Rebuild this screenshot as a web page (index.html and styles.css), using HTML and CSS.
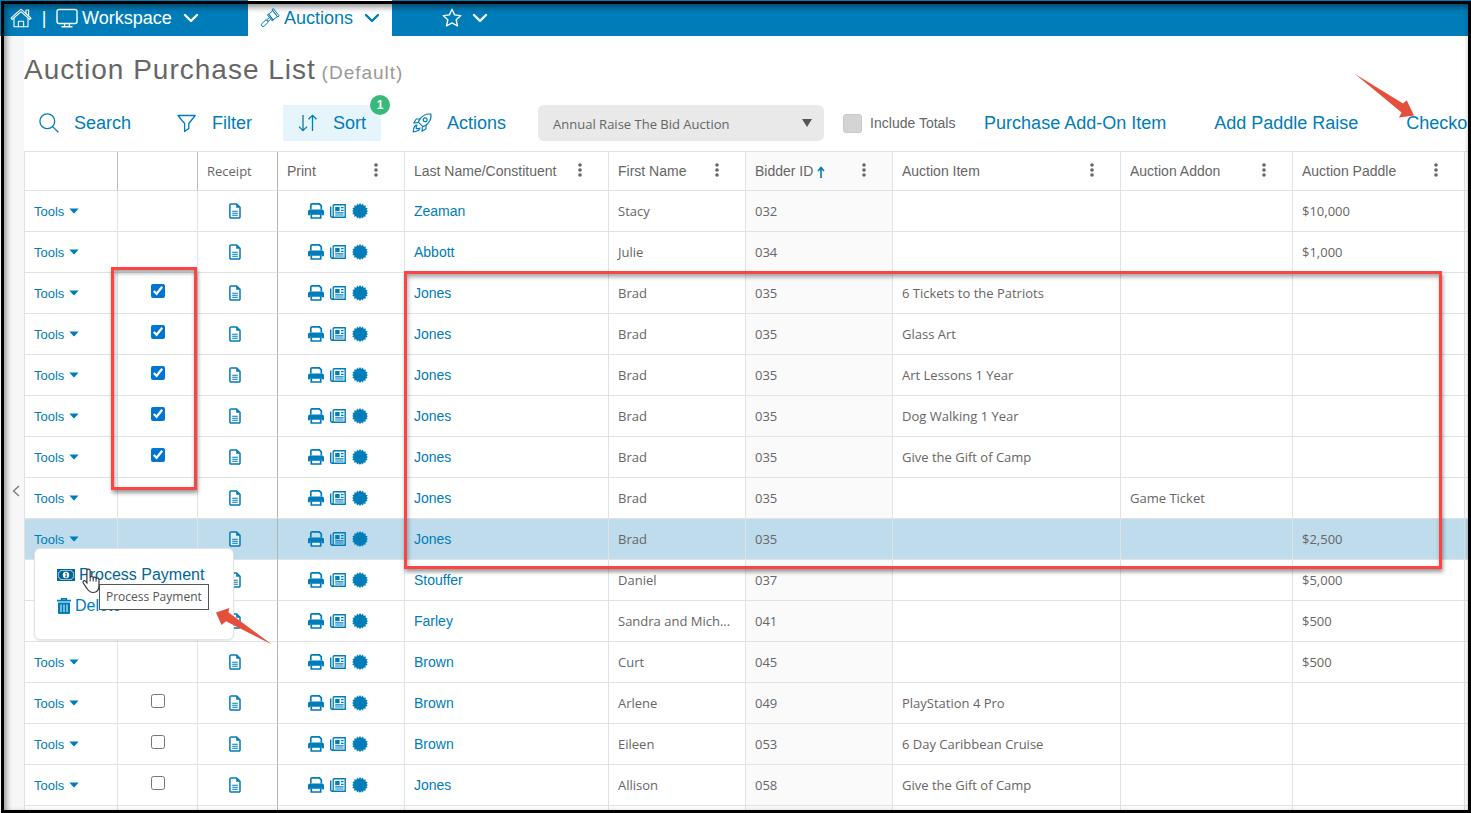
FILE: index.html
```html
<!DOCTYPE html>
<html lang="en">
<head>
<meta charset="utf-8">
<meta name="viewport" content="width=device-width, initial-scale=1">
<title>Auction Purchase List</title>
<link rel="stylesheet" href="styles.css">
</head>
<body>
<svg class="sprite" aria-hidden="true">
  <symbol id="doc" viewBox="0 0 12 16"><path d="M2 .9h5.6L11 4.3V14a1.1 1.1 0 0 1-1.1 1.1H2A1.1 1.1 0 0 1 .9 14V2A1.1 1.1 0 0 1 2 .9z" fill="#fff" fill-opacity=".5" stroke="currentColor" stroke-width="1.5"/><path d="M7.2 1v3.8H11z" fill="currentColor"/><path d="M3.2 8.2h5.6M3.2 10.2h5.6M3.2 12.2h5.6" stroke="currentColor" stroke-width="1.1"/></symbol>
  <symbol id="printer" viewBox="0 0 16 16"><path d="M2.8 6.5V2A1.2 1.2 0 0 1 4 .9h7.3l2 2v3.6" fill="none" stroke="currentColor" stroke-width="1.7"/><path d="M2 6.600h12a2 2 0 0 1 2 2v3.600h-2.4V10.400H2.4v1.800H0V8.600a2 2 0 0 1 2-2z" fill="currentColor"/><path d="M3.3 10.8h9.4v4.2H3.3z" fill="#fff" fill-opacity=".7" stroke="currentColor" stroke-width="1.7"/></symbol>
  <symbol id="news" viewBox="0 0 16 14"><path d="M3.2.8h12v12.4H2.1A1.4 1.4 0 0 1 .7 11.8V2.6" fill="none" stroke="currentColor" stroke-width="1.4"/><path d="M3.2 1v10.8a1.3 1.3 0 0 1-1.2 1.4" fill="none" stroke="currentColor" stroke-width="1.3"/><path d="M5.2 3h4.4v4.2H5.2z" fill="currentColor"/><path d="M11 3.6h2.6M11 6.4h2.6M5.2 8.9h8.4M5.2 11h8.4" stroke="currentColor" stroke-width="1.2"/></symbol>
  <symbol id="seal" viewBox="0 0 16 16"><path fill="currentColor" d="M8 0l1.4 2L11 .6l.6 2.2 2.200-.4-.2 2.300 2.100.5-1.200 1.900L16 8l-1.500 1.200 1.100 1.800-2.100.6.2 2.200-2.200-.4-.5 2.200-1.700-1.400L8 16l-1.400-1.800L5 15.500l-.6-2.200-2.200.5.200-2.300-2.100-.5 1.200-1.900L0 8l1.500-1.100L.4 5l2.100-.5-.2-2.200 2.200.4L5 .6 6.700 2z"/></symbol>
  <symbol id="dots" viewBox="0 0 4 14"><g fill="currentColor"><circle cx="2" cy="2" r="1.8"/><circle cx="2" cy="7" r="1.8"/><circle cx="2" cy="12" r="1.8"/></g></symbol>
  <symbol id="chev" viewBox="0 0 16 10"><path d="M2 2l6 6 6-6" fill="none" stroke="currentColor" stroke-width="2.4" stroke-linecap="round" stroke-linejoin="round"/></symbol>
  <symbol id="caret" viewBox="0 0 10 6"><path d="M.4.5h9.2L5.6 5a.8.8 0 0 1-1.2 0z" fill="currentColor"/></symbol>
</svg>

<div class="app">
  <nav class="nav">
    <button class="nav-btn" aria-label="Home"><svg width="22" height="20" viewBox="0 0 22 20" fill="none" stroke="currentColor" stroke-width="1.1" stroke-linejoin="round" stroke-linecap="round"><path d="M1 10.2L11 1.2l10 9-1.1 1.3L11 3.6 2.1 11.500z"/><path d="M4 10.2V18.8h14V10.2"/><path d="M16 5.4V2h2.6v5.8"/><path d="M8.4 18.8v-5.600h5.200v5.600"/></svg></button>
    <span class="nav-sep">|</span>
    <button class="nav-btn workspace"><svg width="22" height="20" viewBox="0 0 22 20" fill="none" stroke="currentColor" stroke-width="1.4"><rect x="1" y="1.5" width="20" height="14" rx="2"/><path d="M8.6 15.5v3M13.4 15.5v3M5.5 18.7h11"/></svg><span>Workspace</span><svg class="chev" width="16" height="10"><use href="#chev"/></svg></button>
    <button class="nav-btn tab"><svg width="20" height="20" viewBox="0 0 20 20" fill="none" stroke="currentColor" stroke-width="1" stroke-linejoin="round"><path d="M8.6 6.6l4-4 4.8 6-4.6 3.4z"/><path d="M12 1.6l1.5-.9 5.6 7.1-1.3 1.3zM7.4 6.8l1.2-.9 4.9 6.2-1.2.9z"/><path d="M9 9.8l-2.2 2 1.3 1.5 2.3-1.9"/><path d="M6.2 11.6l2.2 2.5-4.3 4a1.7 1.7 0 0 1-2.3-2.5z"/></svg><span>Auctions</span><svg class="chev" width="16" height="10"><use href="#chev"/></svg></button>
    <button class="nav-btn star" aria-label="Favorites"><svg width="20" height="20" viewBox="0 0 20 20" fill="none" stroke="currentColor" stroke-width="1.4" stroke-linejoin="round"><path d="M10 1.2l2.6 5.7 6.2.7-4.6 4.2 1.3 6.2-5.5-3.1L4.500 18l1.300-6.200L1.200 7.600l6.200-.7z"/></svg><svg class="chev" width="16" height="10"><use href="#chev"/></svg></button>
  </nav>

  <div class="body">
    <aside class="rail"><button class="rail-btn" aria-label="Expand sidebar"><svg width="8" height="12" viewBox="0 0 8 12"><path d="M7 1L1.500 6 7 11" fill="none" stroke="currentColor" stroke-width="1.300"/></svg></button></aside>
    <main class="main">
      <h1 class="title">Auction Purchase List <small>(Default)</small></h1>

      <div class="toolbar">
        <button class="tool"><svg width="20" height="20" viewBox="0 0 20 20" fill="none" stroke="currentColor" stroke-width="1.300"><circle cx="8.300" cy="8.300" r="7.400"/><path d="M13.600 13.600l5.800 5.600"/></svg>Search</button>
        <button class="tool"><svg width="20" height="20" viewBox="0 0 20 20" fill="none" stroke="currentColor" stroke-width="1.300" stroke-linejoin="round"><path d="M1 2.500h17.200L11.800 10.500v5l-4.200 3v-8z"/></svg>Filter</button>
        <button class="tool active"><svg width="20" height="20" viewBox="0 0 20 20" fill="none" stroke="currentColor" stroke-width="1.300"><path d="M5 2v15.500M1 13.600l4 4 4-4M14.500 18V2.300M10.500 6.300l4-4 4 4"/></svg>Sort<span class="badge">1</span></button>
        <button class="tool"><svg width="20" height="20" viewBox="0 0 20 20" fill="none" stroke="currentColor" stroke-width="1.200" stroke-linejoin="round"><path d="M18.900 1.100c-5-.6-8.300 1-11.200 5.300L6.300 9.100l4.600 4.600 2.700-1.400c4.300-2.900 5.900-6.200 5.300-11.200z"/><circle cx="13.200" cy="6.800" r="1.900"/><path d="M8 6H4.300L1.800 10l4.100-.4M14 12v3.700L10 18.200l.4-4.100"/><path d="M5.500 12.200c-2-.6-4 1.300-4.300 6.600 5.200-.3 7.200-2.300 6.600-4.300M4.300 12v3.700H8"/></svg>Actions</button>
        <select class="picker" aria-label="Auction"><option>Annual Raise The Bid Auction</option></select>
        <label class="totals"><input type="checkbox" class="totals-box">Include Totals</label>
        <a class="link" href="#">Purchase Add-On Item</a>
        <a class="link" href="#">Add Paddle Raise</a>
        <a class="link" href="#">Checkout</a>
      </div>

      <div class="grid-wrap">
        <table class="grid">
          <colgroup><col class="c-tools"><col class="c-sel"><col class="c-sel"><col class="c-print"><col class="c-last"><col class="c-first"><col class="c-bid"><col class="c-item"><col class="c-addon"><col class="c-addon"><col></colgroup>
          <thead>
            <tr><th></th><th></th><th class="receipt">Receipt</th>
              <th><div class="head">Print<button class="more" aria-label="Print menu"><svg><use href="#dots"/></svg></button></div></th>
              <th><div class="head">Last Name/Constituent<button class="more" aria-label="Last name menu"><svg><use href="#dots"/></svg></button></div></th>
              <th><div class="head">First Name<button class="more" aria-label="First name menu"><svg><use href="#dots"/></svg></button></div></th>
              <th><div class="head"><span>Bidder ID <svg class="up" viewBox="0 0 8 12"><path d="M4 12V2M1 5l3-3.500L7 5" fill="none" stroke="currentColor" stroke-width="1.600"/></svg></span><button class="more" aria-label="Bidder menu"><svg><use href="#dots"/></svg></button></div></th>
              <th><div class="head">Auction Item<button class="more" aria-label="Item menu"><svg><use href="#dots"/></svg></button></div></th>
              <th><div class="head">Auction Addon<button class="more" aria-label="Addon menu"><svg><use href="#dots"/></svg></button></div></th>
              <th><div class="head">Auction Paddle<button class="more" aria-label="Paddle menu"><svg><use href="#dots"/></svg></button></div></th>
              <th></th></tr>
          </thead>
          <tbody>
            <tr><td><button class="tools">Tools<svg><use href="#caret"/></svg></button></td><td></td><td class="mid"><svg class="doc"><use href="#doc"/></svg></td><td class="mid"><span class="prints"><svg><use href="#printer"/></svg><svg class="news"><use href="#news"/></svg><svg><use href="#seal"/></svg></span></td><td><a href="#">Zeaman</a></td><td>Stacy</td><td>032</td><td></td><td></td><td>$10,000</td><td></td></tr>
            <tr><td><button class="tools">Tools<svg><use href="#caret"/></svg></button></td><td></td><td class="mid"><svg class="doc"><use href="#doc"/></svg></td><td class="mid"><span class="prints"><svg><use href="#printer"/></svg><svg class="news"><use href="#news"/></svg><svg><use href="#seal"/></svg></span></td><td><a href="#">Abbott</a></td><td>Julie</td><td>034</td><td></td><td></td><td>$1,000</td><td></td></tr>
            <tr><td><button class="tools">Tools<svg><use href="#caret"/></svg></button></td><td class="mid"><input type="checkbox" class="pick" aria-label="Select row" checked></td><td class="mid"><svg class="doc"><use href="#doc"/></svg></td><td class="mid"><span class="prints"><svg><use href="#printer"/></svg><svg class="news"><use href="#news"/></svg><svg><use href="#seal"/></svg></span></td><td><a href="#">Jones</a></td><td>Brad</td><td>035</td><td>6 Tickets to the Patriots</td><td></td><td></td><td></td></tr>
            <tr><td><button class="tools">Tools<svg><use href="#caret"/></svg></button></td><td class="mid"><input type="checkbox" class="pick" aria-label="Select row" checked></td><td class="mid"><svg class="doc"><use href="#doc"/></svg></td><td class="mid"><span class="prints"><svg><use href="#printer"/></svg><svg class="news"><use href="#news"/></svg><svg><use href="#seal"/></svg></span></td><td><a href="#">Jones</a></td><td>Brad</td><td>035</td><td>Glass Art</td><td></td><td></td><td></td></tr>
            <tr><td><button class="tools">Tools<svg><use href="#caret"/></svg></button></td><td class="mid"><input type="checkbox" class="pick" aria-label="Select row" checked></td><td class="mid"><svg class="doc"><use href="#doc"/></svg></td><td class="mid"><span class="prints"><svg><use href="#printer"/></svg><svg class="news"><use href="#news"/></svg><svg><use href="#seal"/></svg></span></td><td><a href="#">Jones</a></td><td>Brad</td><td>035</td><td>Art Lessons 1 Year</td><td></td><td></td><td></td></tr>
            <tr><td><button class="tools">Tools<svg><use href="#caret"/></svg></button></td><td class="mid"><input type="checkbox" class="pick" aria-label="Select row" checked></td><td class="mid"><svg class="doc"><use href="#doc"/></svg></td><td class="mid"><span class="prints"><svg><use href="#printer"/></svg><svg class="news"><use href="#news"/></svg><svg><use href="#seal"/></svg></span></td><td><a href="#">Jones</a></td><td>Brad</td><td>035</td><td>Dog Walking 1 Year</td><td></td><td></td><td></td></tr>
            <tr><td><button class="tools">Tools<svg><use href="#caret"/></svg></button></td><td class="mid"><input type="checkbox" class="pick" aria-label="Select row" checked></td><td class="mid"><svg class="doc"><use href="#doc"/></svg></td><td class="mid"><span class="prints"><svg><use href="#printer"/></svg><svg class="news"><use href="#news"/></svg><svg><use href="#seal"/></svg></span></td><td><a href="#">Jones</a></td><td>Brad</td><td>035</td><td>Give the Gift of Camp</td><td></td><td></td><td></td></tr>
            <tr><td><button class="tools">Tools<svg><use href="#caret"/></svg></button></td><td></td><td class="mid"><svg class="doc"><use href="#doc"/></svg></td><td class="mid"><span class="prints"><svg><use href="#printer"/></svg><svg class="news"><use href="#news"/></svg><svg><use href="#seal"/></svg></span></td><td><a href="#">Jones</a></td><td>Brad</td><td>035</td><td></td><td>Game Ticket</td><td></td><td></td></tr>
            <tr class="hover"><td><button class="tools">Tools<svg><use href="#caret"/></svg></button></td><td></td><td class="mid"><svg class="doc"><use href="#doc"/></svg></td><td class="mid"><span class="prints"><svg><use href="#printer"/></svg><svg class="news"><use href="#news"/></svg><svg><use href="#seal"/></svg></span></td><td><a href="#">Jones</a></td><td>Brad</td><td>035</td><td></td><td></td><td>$2,500</td><td></td></tr>
            <tr><td></td><td></td><td class="mid"><svg class="doc"><use href="#doc"/></svg></td><td class="mid"><span class="prints"><svg><use href="#printer"/></svg><svg class="news"><use href="#news"/></svg><svg><use href="#seal"/></svg></span></td><td><a href="#">Stouffer</a></td><td>Daniel</td><td>037</td><td></td><td></td><td>$5,000</td><td></td></tr>
            <tr><td></td><td></td><td class="mid"><svg class="doc"><use href="#doc"/></svg></td><td class="mid"><span class="prints"><svg><use href="#printer"/></svg><svg class="news"><use href="#news"/></svg><svg><use href="#seal"/></svg></span></td><td><a href="#">Farley</a></td><td>Sandra and Mich...</td><td>041</td><td></td><td></td><td>$500</td><td></td></tr>
            <tr><td><button class="tools">Tools<svg><use href="#caret"/></svg></button></td><td></td><td class="mid"><svg class="doc"><use href="#doc"/></svg></td><td class="mid"><span class="prints"><svg><use href="#printer"/></svg><svg class="news"><use href="#news"/></svg><svg><use href="#seal"/></svg></span></td><td><a href="#">Brown</a></td><td>Curt</td><td>045</td><td></td><td></td><td>$500</td><td></td></tr>
            <tr><td><button class="tools">Tools<svg><use href="#caret"/></svg></button></td><td class="mid"><input type="checkbox" class="pick" aria-label="Select row"></td><td class="mid"><svg class="doc"><use href="#doc"/></svg></td><td class="mid"><span class="prints"><svg><use href="#printer"/></svg><svg class="news"><use href="#news"/></svg><svg><use href="#seal"/></svg></span></td><td><a href="#">Brown</a></td><td>Arlene</td><td>049</td><td>PlayStation 4 Pro</td><td></td><td></td><td></td></tr>
            <tr><td><button class="tools">Tools<svg><use href="#caret"/></svg></button></td><td class="mid"><input type="checkbox" class="pick" aria-label="Select row"></td><td class="mid"><svg class="doc"><use href="#doc"/></svg></td><td class="mid"><span class="prints"><svg><use href="#printer"/></svg><svg class="news"><use href="#news"/></svg><svg><use href="#seal"/></svg></span></td><td><a href="#">Brown</a></td><td>Eileen</td><td>053</td><td>6 Day Caribbean Cruise</td><td></td><td></td><td></td></tr>
            <tr><td><button class="tools">Tools<svg><use href="#caret"/></svg></button></td><td class="mid"><input type="checkbox" class="pick" aria-label="Select row"></td><td class="mid"><svg class="doc"><use href="#doc"/></svg></td><td class="mid"><span class="prints"><svg><use href="#printer"/></svg><svg class="news"><use href="#news"/></svg><svg><use href="#seal"/></svg></span></td><td><a href="#">Jones</a></td><td>Allison</td><td>058</td><td>Give the Gift of Camp</td><td></td><td></td><td></td></tr>
            <tr><td></td><td></td><td></td><td></td><td></td><td></td><td></td><td></td><td></td><td></td><td></td></tr>
          </tbody>
        </table>

        <div class="menu">
          <button class="menu-item pay"><svg width="18" height="12" viewBox="0 0 18 12"><path d="M0 0h18v12H0z" fill="currentColor"/><path d="M3.400 1.500h11.200a2 2 0 0 0 2 2v5a2 2 0 0 0-2 2H3.400a2 2 0 0 0-2-2v-5a2 2 0 0 0 2-2z" fill="currentColor" stroke="#fff" stroke-width=".6"/><circle cx="9" cy="6" r="3.200" fill="#fff"/><path d="M8.200 4.600l1-.4v3.500M8 7.800h2.200" stroke="currentColor" fill="none"/></svg>Process Payment</button>
          <button class="menu-item del"><svg width="14" height="16" viewBox="0 0 14 16" fill="none" stroke="currentColor"><path d="M0 2.600h14M4.600 2V.8h4.800V2" stroke-width="1.600"/><path d="M1 4.500h12V15a1 1 0 0 1-1 .9H2a1 1 0 0 1-1-.9z" fill="currentColor" stroke="none"/><path d="M4 6.500v7.500M7 6.500v7.500M10 6.500v7.500" stroke="#fff" stroke-width=".9"/></svg>Delete</button>
        </div>
        <div class="tip" role="tooltip">Process Payment</div>
        <svg class="cursor" width="20" height="26" viewBox="0 0 20 26"><path d="M6.500 1.200c1.100 0 1.700.8 1.700 1.800v6.400c.4-1.300 2.700-1.200 3 .4.600-1 2.600-.9 2.900.7.800-.9 2.900-.5 2.900 1.400v5.600c0 4-2 7-5.800 7-3.400 0-4.900-1.800-6.400-4.200L1.300 15c-1-1.600.9-3 2.100-1.800l1.500 1.700V3c0-1 .6-1.800 1.600-1.800z" fill="#fff" stroke="#333745" stroke-width="1.200"/><path d="M8.200 9v4.500M11.200 10v3.500M14.100 11v2.800" stroke="#333745"/></svg>
        <div class="mark mark-checks"></div>
        <div class="mark mark-rows"></div>
        <svg class="arrow arrow-menu" width="58" height="38" viewBox="0 0 58 38"><path d="M1 4.500L14.500 0l-1.200 4.200L57 36.500 11 13.200 6.500 17z" fill="#e54f3b"/></svg>
        <svg class="arrow arrow-checkout" width="60" height="44" viewBox="0 0 60 44"><path d="M0 0l48 29.500 3.700-3.300L59 41.500l-15 2 2.600-5z" fill="#e54f3b"/></svg>
      </div>
    </main>
  </div>
</div>
</body>
</html>
```
FILE: styles.css
```css
* { box-sizing: border-box; }
body { margin: 0; font-family: "Liberation Sans", Arial, sans-serif; color: #666; background: #fff; }
button { border: 0; padding: 0; margin: 0; background: none; font: inherit; color: inherit; cursor: pointer; }
a { color: #007cb9; text-decoration: none; }
svg { display: block; flex: none; }
.sprite { position: absolute; width: 0; height: 0; }

.app { position: relative; height: 100vh; overflow: hidden; display: flex; flex-direction: column; }
.app::after {
  content: ""; position: absolute; inset: 1px 0 0 1px; z-index: 20; pointer-events: none;
  border: 3px solid #000;
  box-shadow: inset 2px 3px 6px rgba(0, 0, 0, .45);
}

.nav { display: flex; align-items: stretch; flex: none; height: 36px; padding-left: 10px; background: #007cb9; color: #fff; font-size: 18px; }
.nav-btn { display: flex; align-items: center; gap: 4px; }
.nav-sep { width: 24px; line-height: 36px; text-align: center; }
.chev { margin-left: 7px; }
.workspace { width: 192px; }
.tab { width: 144px; padding-left: 12px; background: #fff; color: #007cb9; }
.star { margin-left: 50px; }
.star .chev { margin-left: 6px; }

.body { display: flex; flex: 1; min-height: 0; }
.rail { display: flex; align-items: center; justify-content: flex-end; width: 24px; padding: 132px 4px 0 0; background: #f7f7f7; color: #777; flex: none; }
.main { flex: 1; min-width: 0; overflow: hidden; }

.title { margin: 0; padding-top: 17px; font-size: 28px; line-height: 34px; font-weight: 400; letter-spacing: 1px; white-space: nowrap; }
.title small { font-size: 19px; color: #999; margin-left: -3px; }

.toolbar { display: flex; align-items: center; height: 36px; margin: 15px 0 10px; color: #007cb9; font-size: 18px; white-space: nowrap; }
.tool { position: relative; display: flex; align-items: center; gap: 15px; flex: none; height: 36px; padding: 0 15px; margin-right: 16px; }
.active { background: #e6f4fb; }
.badge { position: absolute; top: -10px; right: -9px; width: 20px; height: 20px; border-radius: 50%; background: #38b977; color: #fff; font-size: 12px; line-height: 20px; font-weight: 700; text-align: center; }
.picker {
  appearance: none; flex: none; width: 286px; height: 36px; padding: 1px 15px 0; margin-left: 1px; border: 0; border-radius: 6px;
  color: #666; font: 13px "Open Sans", "Noto Sans", sans-serif;
  background: #e9e9e9 url("data:image/svg+xml,%3Csvg xmlns='http://www.w3.org/2000/svg' width='10' height='8'%3E%3Cpath d='M0 0h10L5 8z' fill='%23555'/%3E%3C/svg%3E") no-repeat right 12px top 14px;
}
.totals { display: flex; align-items: center; gap: 8px; width: 141px; margin-left: 19px; flex: none; color: #666; font-size: 14px; }
.totals-box { appearance: none; width: 19px; height: 19px; margin: 0; border: 1px solid #c8c8c8; border-radius: 3px; background: #d4d4d4; }
.link { flex: none; margin-right: 48px; }

.grid-wrap { position: relative; }
.grid { width: 100%; table-layout: fixed; border-collapse: separate; border-spacing: 0; border-top: 1px solid #dfe3e8; border-left: 1px solid #dfe3e8; font: 13px "Open Sans", "Noto Sans", sans-serif; }
.c-tools { width: 93px; }
.c-sel { width: 80px; }
.c-print { width: 127px; }
.c-last { width: 204px; }
.c-first { width: 137px; }
.c-bid { width: 147px; }
.c-item { width: 228px; }
.c-addon { width: 172px; }
.grid th, .grid td { height: 41px; padding: 0 0 0 9px; border-right: 1px solid #dfe3e8; border-bottom: 1px solid #dfe3e8; text-align: left; font-weight: 400; white-space: nowrap; overflow: hidden; }
.grid th { height: 39px; font-family: "Liberation Sans", Arial, sans-serif; font-size: 14px; }
.grid .receipt { font: 13px "Open Sans", sans-serif; }
.grid th:nth-child(-n+2) { border-right: 1px solid #bbb; }
.grid th:nth-child(3), .grid td:nth-child(3) { border-right: 1px solid #b4b4b4; }
.grid th:nth-child(7), .grid td:nth-child(7) { background: #fafafa; }
.grid .hover td { background: #bedcec; }
.grid td a { font: 14px "Liberation Sans", Arial, sans-serif; }
.grid td.mid { padding: 0; text-align: center; }
.head { display: flex; align-items: center; justify-content: space-between; padding-right: 26px; }
.more { padding-bottom: 3px; }
.more svg { width: 4px; height: 14px; }
.up { display: inline-block; width: 8px; height: 12px; color: #007cb9; vertical-align: -2px; }
.tools { display: flex; align-items: center; gap: 5px; color: #007cb9; font: 13px "Liberation Sans", Arial, sans-serif; }
.tools svg { width: 10px; height: 6px; }
.grid td .doc { width: 12px; height: 16px; margin: 0 auto 0 31px; color: #007cb9; }
.prints { display: flex; justify-content: center; align-items: center; gap: 6px; color: #007cb9; padding-right: 6px; }
.prints svg { width: 16px; height: 16px; }
.prints .news { height: 14px; }
.pick { display: block; width: 14px; height: 14px; margin: 0 auto 5px; accent-color: #0075d2; }

.menu { position: absolute; z-index: 3; left: 10px; top: 397px; width: 200px; height: 92px; padding: 17px 0 0 22px; background: #fff; border: 1px solid #e2e4e8; border-radius: 6px; box-shadow: 0 1px 2px rgba(0, 0, 0, .1); font-size: 16px; color: #007cb9; }
.menu-item { display: flex; align-items: center; gap: 4px; line-height: 18px; margin-bottom: 13px; }
.pay { color: #006699; }
.tip { position: absolute; z-index: 5; left: 75px; top: 433px; padding: 0 6px; border: 1px solid #555; background: #fff; color: #555; font: 12px/24px "Open Sans", "Noto Sans", sans-serif; white-space: nowrap; }
.cursor { position: absolute; z-index: 6; left: 58px; top: 417px; }
.mark { position: absolute; z-index: 2; border: 3px solid #fb4444; box-shadow: 1px 3px 4px rgba(0, 0, 0, .4), inset 1px 3px 4px rgba(0, 0, 0, .35); }
.mark-checks { left: 87px; top: 116px; width: 86px; height: 223px; }
.mark-rows { left: 380px; top: 120px; right: 29px; height: 298px; }
.arrow { position: absolute; z-index: 7; }
.arrow-menu { left: 191px; top: 457px; }
.arrow-checkout { right: 56px; top: -77px; }
```
